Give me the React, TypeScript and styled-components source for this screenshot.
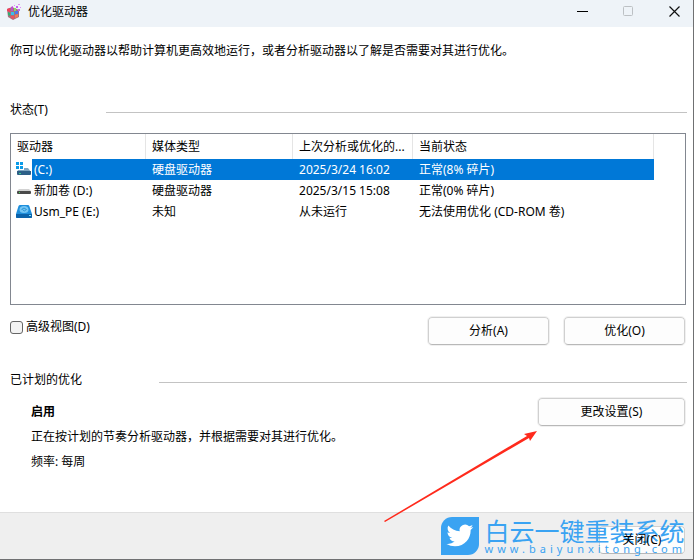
import React from "react";
import styled, { createGlobalStyle, css } from "styled-components";

const GlobalStyle = createGlobalStyle`
  * { box-sizing: border-box; }
  body {
    margin: 0;
    background: #fff;
    color: #000;
    font-family: "Noto Sans", "Noto Sans CJK SC", sans-serif;
    font-size: 12px;
    line-height: 20px;
  }
  button, input { font: inherit; color: inherit; }
`;

const Window = styled.div`
  position: relative;
  display: flex;
  flex-direction: column;
  min-height: 100vh;
  border-right: 1px solid #6f7072;
  border-bottom: 1px solid #6f7072;
`;

const TitleBar = styled.header`
  display: flex;
  align-items: center;
  justify-content: space-between;
  height: 27px;
  padding-left: 6px;
  background: #eef3f8;
`;

const Title = styled.h1`
  display: flex;
  align-items: center;
  gap: 6px;
  height: 22px;
  margin: 0 0 4px;
  font-size: 12px;
  font-weight: 400;
`;

const WindowControls = styled.div`
  display: flex;
  gap: 8px;
  margin-bottom: 4px;
`;

const WindowButton = styled.button`
  display: flex;
  align-items: center;
  justify-content: center;
  width: 38px;
  height: 22px;
  padding: 0;
  border: 0;
  background: transparent;
`;

const Content = styled.main`
  flex: 1;
  padding: 14px 6px 0 10px;
`;

const Intro = styled.p`
  margin: 0 0 39px;
`;

const SectionHeading = styled.div<{ $label: number }>`
  display: grid;
  grid-template-columns: ${(p) => p.$label}px 1fr;
  align-items: center;
  h2 {
    margin: 0;
    font-size: 12px;
    font-weight: 400;
  }
`;

const Rule = styled.span`
  height: 1px;
  margin-top: 4px;
  background: #c3c3c3;
`;

const DriveList = styled.div`
  min-height: 172px;
  margin: 13px 1px 0 0;
  border: 1px solid #828790;
`;

const DriveTable = styled.table`
  width: calc(100% - 31px);
  border-collapse: separate;
  border-spacing: 0;
  table-layout: fixed;
`;

const HeadCell = styled.th`
  height: 25px;
  padding: 0 0 0 6px;
  border-right: 1px solid #e5e5e5;
  font-weight: 400;
  text-align: left;
  white-space: nowrap;
`;

const IconCell = styled.td`
  height: 21px;
  padding: 0 0 0 5px;
  svg { display: block; }
`;

const Cell = styled.td<{ $selected?: boolean; $name?: boolean }>`
  height: 21px;
  padding: 0 0 0 ${(p) => (p.$name ? 2 : 6)}px;
  line-height: 21px;
  white-space: nowrap;
  ${(p) => p.$selected && css`
    background: #0078d7;
    color: #fff;
  `}
`;

const ActionBar = styled.div`
  display: flex;
  align-items: flex-start;
  justify-content: space-between;
  margin: 12px 2px 25px 0;
`;

const CheckLabel = styled.label`
  display: flex;
  align-items: center;
  gap: 3px;
`;

const CheckBox = styled.input`
  appearance: none;
  width: 13px;
  height: 13px;
  margin: 0;
  border: 1px solid #666;
  border-radius: 3px;
  background: #f3f3f3;
`;

const ButtonGroup = styled.div`
  display: flex;
  gap: 15px;
`;

const PushButton = styled.button<{ $width: number }>`
  width: ${(p) => p.$width}px;
  height: 28px;
  padding: 0;
  border: 1px solid #d0d0d0;
  border-bottom-color: #b8b8b8;
  border-radius: 4px;
  outline: 1px solid #f0f0f0;
  background: #fdfdfd;
`;

const Schedule = styled.div`
  display: flex;
  align-items: flex-start;
  justify-content: space-between;
  margin: 8px 2px 0 21px;
`;

const ScheduleText = styled.div`
  display: grid;
  gap: 5px;
  margin-top: 4px;
  p { margin: 0; }
`;

const Footer = styled.footer`
  display: flex;
  justify-content: flex-end;
  height: 47px;
  padding: 13px 8px 0;
  border-top: 1px solid #dfdfdf;
  background: #efefef;
`;

const CloseText = styled.span`
  position: relative;
  z-index: 2;
`;

const Watermark = styled.div`
  position: absolute;
  z-index: 1;
  right: 7px;
  bottom: 4px;
  display: flex;
  gap: 6px;
  color: #3aa3f2;
  pointer-events: none;
`;

const WatermarkText = styled.div`
  display: grid;
  grid-template-rows: 26px 12px;
`;

const WatermarkName = styled.span`
  font-family: "Noto Sans CJK SC", sans-serif;
  font-size: 25px;
  font-weight: 400;
  line-height: 26px;
`;

const WatermarkUrl = styled.span`
  font-size: 11px;
  line-height: 12px;
  letter-spacing: 4px;
  white-space: nowrap;
`;

const Arrow = styled.svg`
  position: absolute;
  top: 430px;
  right: 155px;
  pointer-events: none;
`;

const DefragIcon = () => (
  <svg width="16" height="18" viewBox="0 0 16 18" aria-hidden="true">
    <path d="M1 6l5-2 7 3v7l-6 3-5-3z" fill="#a8707c" />
    <path d="M1 6l3-1v4l-3-1z" fill="#f0405c" />
    <path d="M5 4l2-1v5H5z" fill="#c04fd0" />
    <path d="M2 9l2 1v3l-2-1z" fill="#2fae74" />
    <path d="M5 9h3v3H5z" fill="#35c0ee" />
    <path d="M5 13h3v3l-3-1z" fill="#f0525e" />
    <path d="M9 8h3v3H9z" fill="#4a78ea" />
    <path d="M9 12l3-1v3l-3 1z" fill="#f07a58" />
    <path d="M8 5h2v3H8z" fill="#86dc64" />
    <path d="M10 3h2v2h-2zM12 6h2v2h-2z" fill="#c565ee" />
    <path d="M8 2h1v1H8zM12 1h2v1h-2zM14 4h1v1h-1z" fill="#df8df7" />
  </svg>
);

const SystemDriveIcon = () => (
  <svg width="16" height="16" viewBox="0 0 16 16" aria-hidden="true">
    <path d="M3 6h9l3 4H1z" fill="#7fa5c0" />
    <path d="M1 9h14v3q0 1-1 1H2q-1 0-1-1z" fill="#2d5f87" />
    <path d="M3 11h2v1H3z" fill="#3ccf8a" />
    <path d="M0 0h8v8H0z" fill="#fff" />
    <path d="M0 0h3v3H0zM4 0h3v3H4zM0 4h3v3H0zM4 4h3v3H4z" fill="#0a9be8" />
  </svg>
);

const DriveIcon = () => (
  <svg width="16" height="16" viewBox="0 0 16 16" aria-hidden="true">
    <path d="M1 8l2-2h10l2 2v1H1z" fill="#d2d2d2" />
    <rect x="1" y="8" width="14" height="3" rx="1" fill="#4a4a4a" />
    <path d="M3 9h1v1H3z" fill="#48dc57" />
  </svg>
);

const UsbDriveIcon = () => (
  <svg width="16" height="16" viewBox="0 0 16 16" aria-hidden="true">
    <path d="M4 1h8q1 0 1.300 1L16 10v3q0 1-1 1H1q-1 0-1-1v-3l2.500-8Q3 1 4 1z" fill="#1f8fdc" />
    <ellipse cx="8" cy="5.500" rx="4.500" ry="3.500" fill="#74c6f4" />
    <path d="M5.500 5.500q2.500-3 5 0q-2.500 3-4 0" fill="none" stroke="#2c93d4" />
    <path d="M0 10h16v3q0 1-1 1H1q-1 0-1-1z" fill="#0b63ab" />
    <path d="M13 11h2v1h-2z" fill="#7ce7ff" />
  </svg>
);

const BirdLogo = () => (
  <svg width="38" height="38" viewBox="0 0 38 38" aria-hidden="true">
    <path d="M11 0h27v27a11 11 0 0 1-11 11H0V11A11 11 0 0 1 11 0z" fill="#3aa3f2" />
    <path
      transform="translate(5.5 5) scale(1.12)"
      d="M23.95 4.57a10 10 0 0 1-2.82.77 4.96 4.96 0 0 0 2.16-2.72c-.95.55-2 .95-3.12 1.18a4.92 4.92 0 0 0-8.38 4.48C7.69 8.1 4.07 6.13 1.64 3.16a4.92 4.92 0 0 0 1.52 6.57 4.9 4.9 0 0 1-2.23-.61v.06a4.92 4.92 0 0 0 3.95 4.83 5 5 0 0 1-2.21.08 4.94 4.94 0 0 0 4.6 3.42A9.87 9.87 0 0 1 0 19.54a13.99 13.99 0 0 0 7.55 2.21c9.05 0 14-7.5 14-13.98 0-.21 0-.42-.02-.63a9.94 9.94 0 0 0 2.42-2.57z"
      fill="#fff"
    />
  </svg>
);

const drives = [
  { icon: <SystemDriveIcon />, name: "(C:)", media: "硬盘驱动器", last: "2025/3/24 16:02", status: "正常(8% 碎片)", selected: true },
  { icon: <DriveIcon />, name: "新加卷 (D:)", media: "硬盘驱动器", last: "2025/3/15 15:08", status: "正常(0% 碎片)", selected: false },
  { icon: <UsbDriveIcon />, name: "Usm_PE (E:)", media: "未知", last: "从未运行", status: "无法使用优化 (CD-ROM 卷)", selected: false },
];

export default function App() {
  return (
    <>
      <GlobalStyle />
      <Window>
        <TitleBar>
          <Title><DefragIcon />优化驱动器</Title>
          <WindowControls>
            <WindowButton aria-label="最小化">
              <svg width="11" height="11"><path d="M0 5.5h11" stroke="#000" /></svg>
            </WindowButton>
            <WindowButton aria-label="最大化" disabled>
              <svg width="11" height="11"><rect x=".5" y=".5" width="9" height="9" rx="1" fill="none" stroke="#bcc0c4" /></svg>
            </WindowButton>
            <WindowButton aria-label="关闭窗口">
              <svg width="11" height="11"><path d="M.5.5l10 10M10.5.5l-10 10" stroke="#111" strokeWidth="1.2" /></svg>
            </WindowButton>
          </WindowControls>
        </TitleBar>

        <Content>
          <Intro>你可以优化驱动器以帮助计算机更高效地运行，或者分析驱动器以了解是否需要对其进行优化。</Intro>

          <SectionHeading $label={96}><h2>状态(T)</h2><Rule /></SectionHeading>
          <DriveList>
            <DriveTable>
              <colgroup>
                <col width="21" />
                <col width="114" />
                <col width="147" />
                <col width="120" />
                <col />
              </colgroup>
              <thead>
                <tr>
                  <HeadCell colSpan={2}>驱动器</HeadCell>
                  <HeadCell>媒体类型</HeadCell>
                  <HeadCell>上次分析或优化的...</HeadCell>
                  <HeadCell>当前状态</HeadCell>
                </tr>
              </thead>
              <tbody>
                {drives.map((d) => (
                  <tr key={d.name}>
                    <IconCell>{d.icon}</IconCell>
                    <Cell $name $selected={d.selected}>{d.name}</Cell>
                    <Cell $selected={d.selected}>{d.media}</Cell>
                    <Cell $selected={d.selected}>{d.last}</Cell>
                    <Cell $selected={d.selected}>{d.status}</Cell>
                  </tr>
                ))}
              </tbody>
            </DriveTable>
          </DriveList>

          <ActionBar>
            <CheckLabel><CheckBox type="checkbox" />高级视图(D)</CheckLabel>
            <ButtonGroup>
              <PushButton $width={121}>分析(A)</PushButton>
              <PushButton $width={121}>优化(O)</PushButton>
            </ButtonGroup>
          </ActionBar>

          <SectionHeading $label={149}><h2>已计划的优化</h2><Rule /></SectionHeading>
          <Schedule>
            <ScheduleText>
              <strong>启用</strong>
              <p>正在按计划的节奏分析驱动器，并根据需要对其进行优化。</p>
              <p>频率: 每周</p>
            </ScheduleText>
            <PushButton $width={147}>更改设置(S)</PushButton>
          </Schedule>
        </Content>

        <Footer>
          <PushButton $width={86}><CloseText>关闭(C)</CloseText></PushButton>
        </Footer>

        <Watermark>
          <BirdLogo />
          <WatermarkText>
            <WatermarkName>白云一键重装系统</WatermarkName>
            <WatermarkUrl>www.baiyunxitong.com</WatermarkUrl>
          </WatermarkText>
        </Watermark>

        <Arrow width="154" height="92" viewBox="0 0 154 92" aria-hidden="true">
          <path d="M0 91L143 6l-3-2 13-3-7 10-1-3L1 92z" fill="#ff2a1c" />
        </Arrow>
      </Window>
    </>
  );
}
